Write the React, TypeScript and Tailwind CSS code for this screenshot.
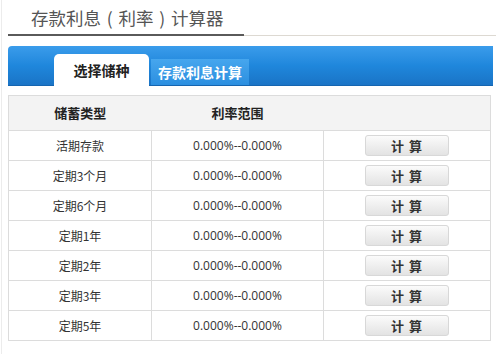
import React from 'react';

const rows = ['活期存款', '定期3个月', '定期6个月', '定期1年', '定期2年', '定期3年', '定期5年'];

const cjk = { fontFamily: '"Microsoft YaHei", "Noto Sans CJK SC", "Noto Sans", sans-serif' };

export default function App() {
  return (
    <div className="w-[500px] h-[354px] bg-white overflow-hidden" style={cjk}>
      <div className="ml-[1px] border-l border-[#ececec] h-full pl-[6px] pr-[7px]">
        {/* Title */}
        <div className="pl-[23px] pt-[7px] h-[34px] text-[17.5px] leading-[22px] text-[#555]">
          存款利息<span className="inline-block w-[1em] text-center">(</span>利率<span className="inline-block w-[1em] text-center">)</span>计算器
        </div>
        <div className="flex items-start">
          <div className="w-[236px] h-[2px] bg-[#5a5a5a]" />
          <div className="flex-1 h-[1px] mt-[1px] bg-[#ddd9d2] -mr-[3px]" />
        </div>

        {/* Tabs bar */}
        <div className="mt-[10px] h-[40px] rounded-tl-[4px] bg-gradient-to-b from-[#3a9ceb] via-[#1f87dc] to-[#1a74c6] border-b border-[#1565b0] flex items-end pl-[46px]">
          <div className="w-[95px] h-[32px] -mb-[1px] bg-white rounded-t-[5px] flex items-center justify-center text-[14px] font-bold text-[#222]">
            选择储种
          </div>
          <div className="ml-[2px] w-[98px] h-[26px] bg-gradient-to-b from-[#46a6ee] to-[#2b8fe0] flex items-center justify-center text-[14px] font-bold text-white">
            存款利息计算
          </div>
        </div>

        {/* Table */}
        <table className="mt-[9px] w-[483px] border-collapse border border-[#dcdcdc] text-[12px] text-[#333]">
          <thead>
            <tr className="h-[35px] bg-[#f3f3f3]">
              <th className="w-[143px] text-[13px] font-bold text-[#222]">储蓄类型</th>
              <th className="w-[172px] text-[13px] font-bold text-[#222]">利率范围</th>
              <th />
            </tr>
          </thead>
          <tbody>
            {rows.map((r) => (
              <tr key={r} className="h-[30px]">
                <td className="border border-[#dcdcdc] text-center">{r}</td>
                <td className="border border-[#dcdcdc] text-center" style={{ fontFamily: '"Open Sans", "Noto Sans", sans-serif' }}>
                  0.000%--0.000%
                </td>
                <td className="border border-[#dcdcdc] text-center">
                  <button className="w-[84px] h-[21px] mx-auto flex items-center justify-center rounded-[3px] border border-[#d8d8d8] bg-gradient-to-b from-[#fbfbfb] to-[#e3e3e3] text-[13px] font-bold text-[#333] tracking-[1px]">
                    计 算
                  </button>
                </td>
              </tr>
            ))}
          </tbody>
        </table>
      </div>
    </div>
  );
}
